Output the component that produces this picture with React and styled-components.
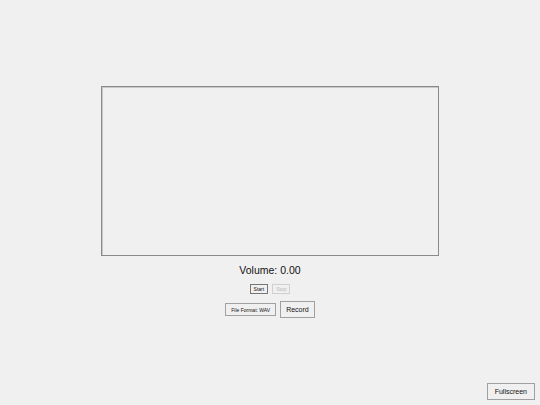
import React from 'react';
import styled, {createGlobalStyle} from 'styled-components';

const GlobalStyle = createGlobalStyle`
  html, body {
    margin: 0;
    padding: 0;
    background: #f0f0f0;
    font-family: "Liberation Sans", Arial, sans-serif;
    color: #111;
  }
`;

export default function App() {
  return (
    <Page>
      <GlobalStyle />
      <Visualizer />
      <Volume>Volume: 0.00</Volume>
      <Controls>
        <SmallButton>Start</SmallButton>
        <SmallButton disabled>Stop</SmallButton>
      </Controls>
      <Controls>
        <FormatButton>File Format: WAV</FormatButton>
        <RecordButton>Record</RecordButton>
      </Controls>
      <FullscreenButton>Fullscreen</FullscreenButton>
    </Page>
  );
}

const Page = styled.div`
  position: relative;
  height: 405px;
  display: flex;
  flex-direction: column;
  align-items: center;
  padding-top: 86px;
  box-sizing: border-box;
`;

const Visualizer = styled.div`
  width: 338px;
  height: 170px;
  box-sizing: border-box;
  border: 1px solid #8a8a8a;
  box-shadow: inset 1px 1px 0 #c8c8c8;
  background: #f0f0f0;
`;

const Volume = styled.div`
  margin-top: 8px;
  font-size: 10.5px;
  line-height: 13px;
`;

const Controls = styled.div`
  display: flex;
  align-items: center;
  gap: 4px;
  margin-top: 7px;
`;

const BaseButton = styled.button`
  font-family: "Liberation Sans", Arial, sans-serif;
  background: #f0f0f0;
  color: #111;
  border: 1px solid #767676;
  border-radius: 0;
  padding: 0;
  margin: 0;
  &:disabled {
    color: #b8b8b8;
    border-color: #d0d0d0;
  }
`;

const SmallButton = styled(BaseButton)`
  height: 10px;
  font-size: 5px;
  padding: 0 3px;
  line-height: 8px;
`;

const FormatButton = styled(BaseButton)`
  height: 13px;
  font-size: 5px;
  padding: 0 5px;
  border-color: #a0a0a0;
`;

const RecordButton = styled(BaseButton)`
  height: 17px;
  font-size: 7px;
  padding: 0 5px;
  border-color: #a0a0a0;
`;

const FullscreenButton = styled(BaseButton)`
  position: absolute;
  right: 5px;
  bottom: 5px;
  height: 17px;
  font-size: 7px;
  padding: 0 7px;
  border-color: #a0a0a0;
`;
